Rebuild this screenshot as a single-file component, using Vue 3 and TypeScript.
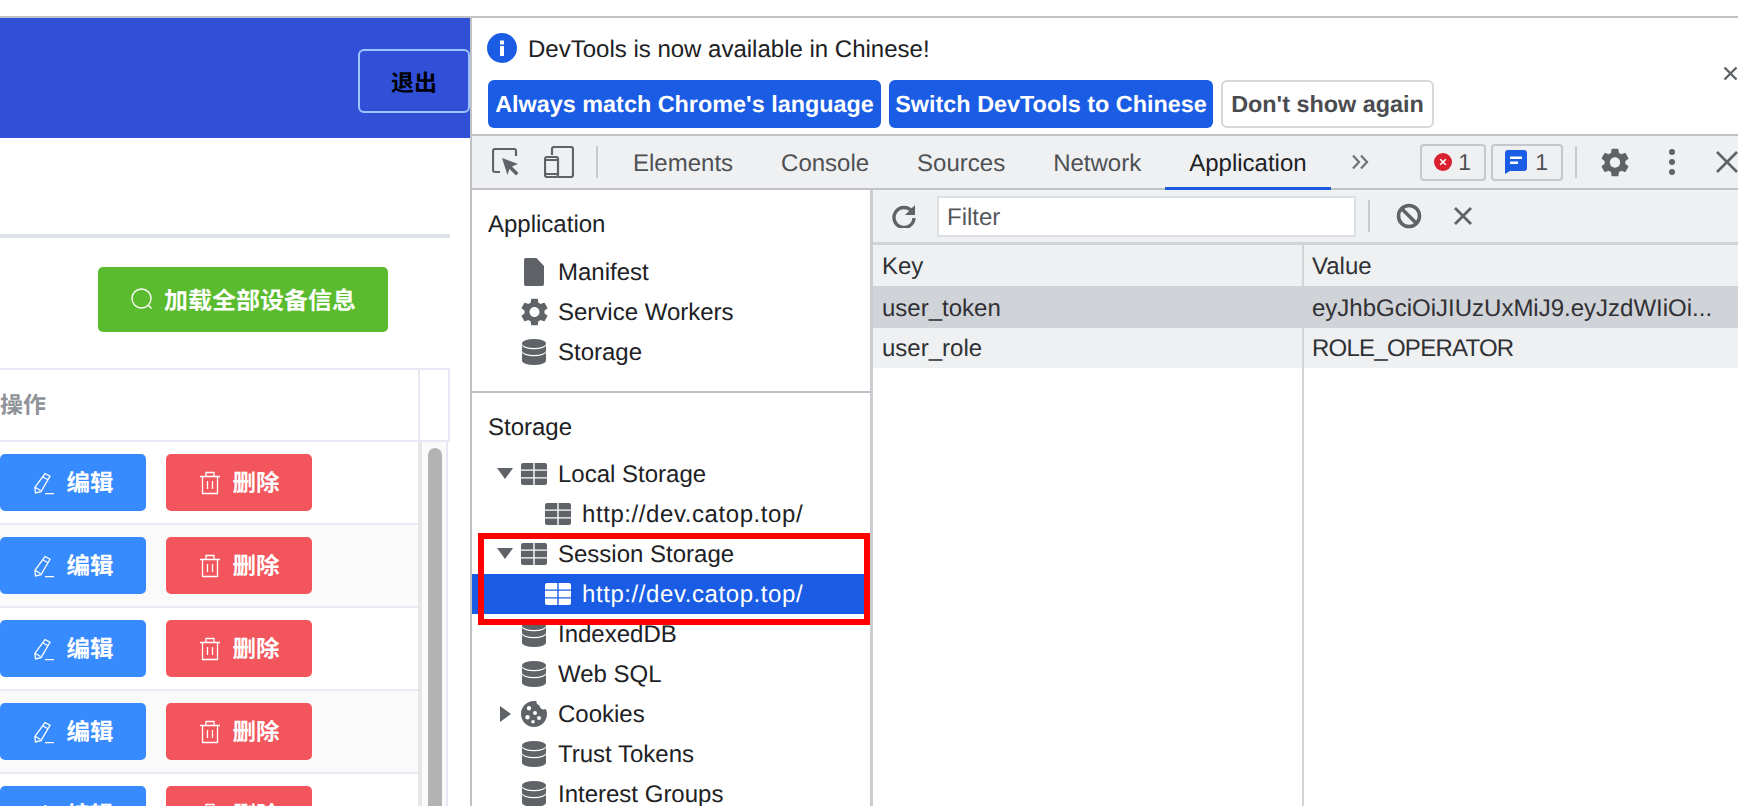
<template>
  <div class="page">
    <svg class="defs" width="0" height="0">
      <symbol id="i-grid" viewBox="0 0 26 22">
        <path d="M2 0h10.300v6.400H0V2a2 2 0 0 1 2-2zM13.700 0H24a2 2 0 0 1 2 2v4.400H13.700zM0 7.800h12.300v6.400H0zM13.700 7.800H26v6.400H13.700zM0 15.600h12.300V22H2a2 2 0 0 1-2-2zM13.700 15.600H26V20a2 2 0 0 1-2 2H13.700z" />
      </symbol>
      <symbol id="i-db" viewBox="0 0 24 26">
        <ellipse cx="12" cy="4.500" rx="12" ry="4.500" />
        <path d="M0 5.700A12 4.500 0 0 0 24 5.700V11.500A12 4.500 0 0 1 0 11.500z" />
        <path d="M0 12.700A12 4.500 0 0 0 24 12.700V21.500A12 4.500 0 0 1 0 21.500z" />
      </symbol>
      <symbol id="i-file" viewBox="0 0 20 28">
        <path d="M2 0h10.500L20 8v18a2 2 0 0 1-2 2H2a2 2 0 0 1-2-2V2a2 2 0 0 1 2-2z" />
      </symbol>
      <symbol id="i-gear" viewBox="2.300 1.900 19.400 20.200">
        <path d="M19.140 12.940c.04-.3.06-.61.06-.94 0-.32-.02-.64-.07-.94l2.030-1.580a.49.49 0 0 0 .12-.61l-1.920-3.320a.488.488 0 0 0-.59-.22l-2.390.96c-.5-.38-1.030-.7-1.620-.94l-.36-2.540a.484.484 0 0 0-.48-.41h-3.840c-.24 0-.43.17-.47.41l-.36 2.540c-.59.24-1.130.57-1.620.94l-2.390-.96c-.22-.08-.47 0-.59.22L2.740 8.870c-.12.21-.08.47.12.61l2.030 1.580c-.05.3-.09.63-.09.94s.02.64.07.94l-2.030 1.580a.49.49 0 0 0-.12.61l1.920 3.320c.12.22.37.29.59.22l2.390-.96c.5.38 1.030.7 1.620.94l.36 2.540c.05.24.24.41.48.41h3.840c.24 0 .44-.17.47-.41l.36-2.540c.59-.24 1.130-.56 1.620-.94l2.390.96c.22.08.47 0 .59-.22l1.920-3.320c.12-.22.07-.47-.12-.61l-2.010-1.580zM12 15.600c-1.980 0-3.600-1.620-3.600-3.600s1.620-3.600 3.600-3.600 3.600 1.620 3.600 3.600-1.620 3.600-3.600 3.600z" />
      </symbol>
      <symbol id="i-cookie" viewBox="0 0 26 26">
        <path fill-rule="evenodd" d="M13 0c.9 0 1.700.1 2.500.3-.3 2 1 3.800 3 4.100.2 2.300 2 4 4.300 4.100.7 0 1.300-.1 1.900-.4.800 1.500 1.300 3.100 1.300 4.900 0 7.200-5.800 13-13 13S0 20.200 0 13 5.800 0 13 0zM8 5a2.200 2.200 0 1 0 0 4.400A2.200 2.200 0 0 0 8 5zm6 5a2 2 0 1 0 0 4 2 2 0 0 0 0-4zM6.500 14a2.200 2.200 0 1 0 0 4.400 2.200 2.200 0 0 0 0-4.400zm11.500 1a2 2 0 1 0 0 4 2 2 0 0 0 0-4zm-6 4a1.800 1.800 0 1 0 0 3.600 1.800 1.800 0 0 0 0-3.600z" />
      </symbol>
    </svg>

    <div class="left-pane">
      <div class="top-bar">
        <button class="logout">退出</button>
      </div>
      <div class="divider"></div>
      <div class="action-row">
        <button class="load-btn">
          <svg class="search-icon" width="22" height="22" viewBox="0 0 22 22">
            <circle cx="10.500" cy="10.500" r="9.500" />
            <path d="M17.500 17.500l3 3" />
          </svg>
          <span>加载全部设备信息</span>
        </button>
      </div>
      <div class="device-table">
        <div class="table-head">
          <div class="head-cell">操作</div>
          <div class="head-gutter"></div>
        </div>
        <div class="table-body">
          <div class="rows">
            <div v-for="n in 5" :key="n" class="row" :class="{ striped: n % 2 === 0 }">
              <button class="row-btn edit">
                <svg width="22" height="24" viewBox="0 0 22 24">
                  <path d="M12 2.500l5 2.800-9 15.400-5.500 1.300-.6-5.600zM10 6l5 2.800M2.500 16.500l5 3M12 22.600h9" />
                </svg>
                <span>编辑</span>
              </button>
              <button class="row-btn remove">
                <svg width="22" height="24" viewBox="0 0 22 24">
                  <path d="M1 5.500h20M7 5.500V1.500h8v4M3.500 5.500v17h15v-17M8.500 10v8M13.500 10v8" />
                </svg>
                <span>删除</span>
              </button>
            </div>
          </div>
          <div class="scroll-track">
            <div class="scroll-thumb"></div>
          </div>
        </div>
      </div>
    </div>

    <div class="devtools">
      <div class="banner">
        <div class="banner-msg">
          <svg width="30" height="30" viewBox="0 0 30 30">
            <circle cx="15" cy="15" r="15" fill="#1a5ce3" />
            <rect x="13" y="13" width="4" height="10" fill="#fff" />
            <rect x="13" y="7.500" width="4" height="4" fill="#fff" />
          </svg>
          <span>DevTools is now available in Chinese!</span>
        </div>
        <div class="banner-actions">
          <button class="lang-btn primary first">Always match Chrome's language</button>
          <button class="lang-btn primary second">Switch DevTools to Chinese</button>
          <button class="lang-btn plain">Don't show again</button>
        </div>
        <svg class="banner-close" width="15" height="15" viewBox="0 0 15 15">
          <path d="M1.500 1.500l12 12M13.500 1.500l-12 12" />
        </svg>
      </div>

      <div class="toolbar">
        <svg class="tool-inspect" width="28" height="28" viewBox="0 0 28 28">
          <path class="line" d="M8 24H3a2 2 0 0 1-2-2V3a2 2 0 0 1 2-2h19a2 2 0 0 1 2 2v5" />
          <path class="solid" d="M10 10l16 6-6 2.500 6.500 6.500-2.500 2.500-6.500-6.500-2 6z" />
        </svg>
        <svg class="tool-device" width="30" height="32" viewBox="0 0 30 32">
          <path class="line" d="M8 9V3a2 2 0 0 1 2-2h17a2 2 0 0 1 2 2v26a2 2 0 0 1-2 2H14" />
          <rect class="line" x="1" y="11" width="13" height="20" rx="2" />
          <path class="line" d="M1 14h13M1 28h13" />
        </svg>
        <div class="tool-sep"></div>
        <div class="tabs">
          <div v-for="tab in tabs" :key="tab" class="tab" :class="{ active: tab === 'Application' }">{{ tab }}</div>
        </div>
        <svg class="chevrons" width="18" height="16" viewBox="0 0 18 16">
          <path d="M2 1.500L8 8l-6 6.500M10 1.500L16 8l-6 6.500" />
        </svg>
        <div class="badge error">
          <svg width="18" height="18" viewBox="0 0 18 18">
            <circle cx="9" cy="9" r="9" fill="#d9202f" />
            <path d="M6.200 6.200l5.600 5.600M11.800 6.200l-5.600 5.600" stroke="#fff" stroke-width="1.600" />
          </svg>
          <span>1</span>
        </div>
        <div class="badge info">
          <svg width="22" height="24" viewBox="0 0 22 24">
            <path d="M3 0h16a3 3 0 0 1 3 3v15a3 3 0 0 1-3 3H5l-5 3V3a3 3 0 0 1 3-3z" fill="#1a5ce3" />
            <path d="M5 6.500h12v2.500H5zM5 11.500h8V14H5z" fill="#fff" />
          </svg>
          <span>1</span>
        </div>
        <div class="tool-sep badge-sep"></div>
        <svg class="solid gear" width="28" height="29"><use href="#i-gear" /></svg>
        <svg class="kebab" width="6" height="26" viewBox="0 0 6 26">
          <circle cx="3" cy="3" r="3" />
          <circle cx="3" cy="13" r="3" />
          <circle cx="3" cy="23" r="3" />
        </svg>
        <svg class="tool-close" width="24" height="24" viewBox="0 0 24 24">
          <path d="M2 2l20 20M22 2L2 22" />
        </svg>
      </div>

      <div class="panels">
        <aside class="sidebar">
          <div class="side-section top">
            <div class="side-title">Application</div>
            <div v-for="item in appItems" :key="item.label" class="side-row">
              <span class="arrow"></span>
              <span class="icon-slot">
                <svg :width="item.w" :height="item.h"><use :href="item.icon" /></svg>
              </span>
              <span class="side-label">{{ item.label }}</span>
            </div>
          </div>
          <div class="side-section">
            <div class="side-title">Storage</div>
            <div
              v-for="item in storageItems"
              :key="item.label + item.sub"
              class="side-row"
              :class="{ sub: item.sub, selected: item.selected }"
            >
              <span class="arrow" :class="item.arrow"></span>
              <span class="icon-slot">
                <svg :width="item.w" :height="item.h"><use :href="item.icon" /></svg>
              </span>
              <span class="side-label">{{ item.label }}</span>
            </div>
          </div>
          <div class="red-box"></div>
        </aside>

        <section class="storage-view">
          <div class="filter-bar">
            <svg class="refresh" width="24" height="24" viewBox="0 0 24 24">
              <path d="M20 7.500A10 10 0 1 0 22 14" />
              <path class="solid-head" d="M23 1v10H13z" />
            </svg>
            <div class="filter-input">Filter</div>
            <div class="filter-sep"></div>
            <svg class="block" width="26" height="26" viewBox="0 0 26 26">
              <circle cx="13" cy="13" r="10.500" />
              <path d="M5.500 5.500l15 15" />
            </svg>
            <svg class="clear" width="20" height="20" viewBox="0 0 20 20">
              <path d="M2 2l16 16M18 2L2 18" />
            </svg>
          </div>
          <div class="kv-table">
            <div class="kv-col key">
              <div class="kv-head">Key</div>
              <div class="kv-cell sel">user_token</div>
              <div class="kv-cell">user_role</div>
            </div>
            <div class="kv-col value">
              <div class="kv-head">Value</div>
              <div class="kv-cell sel">eyJhbGciOiJIUzUxMiJ9.eyJzdWIiOi...</div>
              <div class="kv-cell upper">ROLE_OPERATOR</div>
            </div>
          </div>
        </section>
      </div>
    </div>
  </div>
</template>

<script setup lang="ts">
interface SideItem {
  label: string;
  icon: string;
  w: number;
  h: number;
  sub?: boolean;
  arrow?: string;
  selected?: boolean;
}

const tabs: string[] = ['Elements', 'Console', 'Sources', 'Network', 'Application'];

const appItems: SideItem[] = [
  { label: 'Manifest', icon: '#i-file', w: 20, h: 28 },
  { label: 'Service Workers', icon: '#i-gear', w: 27, h: 28 },
  { label: 'Storage', icon: '#i-db', w: 24, h: 26 },
];

const storageItems: SideItem[] = [
  { label: 'Local Storage', icon: '#i-grid', w: 26, h: 22, arrow: 'down' },
  { label: 'http://dev.catop.top/', icon: '#i-grid', w: 26, h: 22, sub: true },
  { label: 'Session Storage', icon: '#i-grid', w: 26, h: 22, arrow: 'down' },
  { label: 'http://dev.catop.top/', icon: '#i-grid', w: 26, h: 22, sub: true, selected: true },
  { label: 'IndexedDB', icon: '#i-db', w: 24, h: 26 },
  { label: 'Web SQL', icon: '#i-db', w: 24, h: 26 },
  { label: 'Cookies', icon: '#i-cookie', w: 26, h: 26, arrow: 'right' },
  { label: 'Trust Tokens', icon: '#i-db', w: 24, h: 26 },
  { label: 'Interest Groups', icon: '#i-db', w: 24, h: 26 },
];
</script>

<style>
html,
body {
  margin: 0;
  overflow: hidden;
  background: #fff;
}
</style>

<style scoped>
.page {
  display: flex;
  width: 1738px;
  height: 788px;
  margin-top: 16px;
  border-top: 2px solid #c0c2c6;
  overflow: hidden;
  font-family: "Liberation Sans", "Noto Sans CJK SC", sans-serif;
  color: #202124;
  text-rendering: geometricPrecision;
}

.defs {
  position: absolute;
}

button {
  border: 0;
  padding: 0;
  font-family: inherit;
  text-rendering: geometricPrecision;
}

/* left: the web page */
.left-pane {
  width: 470px;
  flex: none;
  font-family: "Noto Sans CJK SC", sans-serif;
}

.top-bar {
  height: 120px;
  background: #324fd8;
  display: flex;
  justify-content: flex-end;
  align-items: center;
  box-sizing: border-box;
}

.logout {
  width: 112px;
  height: 64px;
  margin-top: 6px;
  background: transparent;
  border: 2px solid #9cc4ff;
  border-radius: 6px;
  color: #000;
  font-size: 23px;
  font-weight: 700;
}

.divider {
  width: 450px;
  height: 4px;
  margin-top: 96px;
  background: #dfe2e9;
}

.action-row {
  padding: 29px 0 36px 98px;
}

.load-btn {
  width: 290px;
  height: 65px;
  background: #5bbb2e;
  border-radius: 5px;
  color: #fff;
  font-size: 24px;
  font-weight: 700;
  display: flex;
  align-items: center;
  padding-left: 33px;
  padding-bottom: 2px;
  gap: 11px;
}

.search-icon {
  fill: none;
  stroke: #fff;
  stroke-width: 1.4;
}

.device-table {
  width: 450px;
}

.table-head {
  display: flex;
  height: 70px;
  border-top: 2px solid #e6e9f3;
  border-bottom: 2px solid #e6e9f3;
}

.head-cell {
  width: 418px;
  line-height: 66px;
  font-size: 23px;
  font-weight: 700;
  color: #909399;
  border-right: 2px solid #e6e9f3;
}

.head-gutter {
  flex: 1;
  border-right: 2px solid #e6e9f3;
}

.table-body {
  display: flex;
  height: 364px;
  overflow: hidden;
}

.rows {
  width: 418px;
}

.row {
  display: flex;
  align-items: center;
  gap: 20px;
  height: 81px;
  border-bottom: 2px solid #e8ebf4;
}

.row.striped {
  background: #fafafa;
}

.row-btn {
  width: 146px;
  height: 57px;
  border-radius: 5px;
  color: #fff;
  font-size: 23.5px;
  font-weight: 700;
  line-height: 52px;
  display: flex;
  align-items: center;
  justify-content: center;
  gap: 12px;
}

.row-btn span {
  margin-top: -3px;
}

.row-btn svg {
  fill: none;
  stroke: #fff;
  stroke-width: 1.3;
}

.row-btn.edit {
  background: #388bff;
}

.row-btn.remove {
  background: #f2565c;
}

.scroll-track {
  width: 30px;
  box-sizing: border-box;
  background: #fafafa;
  border-left: 4px solid #e6e6e6;
  border-right: 2px solid #e6e9f3;
  padding: 6px 4px 0 6px;
}

.scroll-thumb {
  height: 420px;
  border-radius: 8px;
  background: #b3b3b3;
}

/* right: devtools */
.devtools {
  flex: 1;
  min-width: 0;
  border-left: 2px solid #c0c2c6;
}

.banner {
  position: relative;
  height: 116px;
  box-sizing: border-box;
  padding: 15px 0 0 15px;
  background: #fff;
}

.banner-msg {
  display: flex;
  align-items: center;
  gap: 11px;
  font-size: 24px;
  height: 30px;
  line-height: 30px;
}

.banner-msg span {
  padding-top: 4px;
}

.banner-actions {
  display: flex;
  margin: 17px 0 0 1px;
}

.lang-btn {
  height: 48px;
  border-radius: 6px;
  font-size: 23.4px;
  box-sizing: border-box;
  white-space: nowrap;
  padding-top: 1px;
}

.lang-btn.primary {
  background: #1a5ce3;
  color: #fff;
  font-weight: 700;
}

.lang-btn.first {
  width: 393px;
}

.lang-btn.second {
  width: 324px;
  margin-left: 8px;
}

.lang-btn.plain {
  width: 213px;
  margin-left: 8px;
  background: #fff;
  border: 2px solid #d5d8dd;
  color: #4a4c50;
  font-weight: 700;
}

.banner-close {
  position: absolute;
  top: 48px;
  right: 0;
  fill: none;
  stroke: #5f6368;
  stroke-width: 2.4;
}

.toolbar {
  display: flex;
  align-items: center;
  height: 52px;
  background: #eef0f2;
  border-top: 2px solid #c0c2c6;
  border-bottom: 2px solid #c0c2c6;
}

.line {
  fill: none;
  stroke: #5f6368;
  stroke-width: 2.2;
}

.solid,
.solid-head {
  fill: #5f6368;
}

.tool-inspect {
  margin-left: 20px;
  flex: none;
}

.tool-device {
  margin-left: 24px;
  flex: none;
}

.tool-sep {
  width: 2px;
  height: 32px;
  margin-left: 22px;
  background: #c7c9cc;
  flex: none;
}

.tabs {
  display: flex;
  align-self: flex-start;
  margin-left: 11px;
}

.tab {
  box-sizing: border-box;
  height: 54px;
  padding: 5px 24px 0;
  line-height: 46px;
  font-size: 24px;
  color: #4e5054;
  border-bottom: 3px solid transparent;
}

.tab.active {
  color: #202124;
  border-bottom-color: #1a5ce3;
}

.chevrons {
  margin-left: 20px;
  fill: none;
  stroke: #6e7175;
  stroke-width: 2.2;
  flex: none;
}

.badge {
  display: flex;
  align-items: center;
  justify-content: center;
  gap: 6px;
  height: 37px;
  box-sizing: border-box;
  border: 2px solid #c4c7cc;
  border-radius: 4px;
  font-size: 23px;
  color: #4e5054;
  flex: none;
}

.badge.error {
  width: 66px;
  margin-left: 51px;
}

.badge.info {
  width: 72px;
  margin-left: 5px;
  gap: 8px;
}

.badge-sep {
  margin-left: 12px;
}

.gear {
  margin-left: 24px;
  flex: none;
}

.kebab {
  margin-left: 40px;
  fill: #5f6368;
  flex: none;
}

.tool-close {
  margin-left: 40px;
  fill: none;
  stroke: #5f6368;
  stroke-width: 2.6;
  flex: none;
}

.panels {
  display: flex;
  height: 616px;
}

.sidebar {
  position: relative;
  width: 398px;
  flex: none;
  background: #fff;
  border-right: 3px solid #c9ccd1;
  font-size: 24px;
}

.side-section {
  padding-top: 14px;
}

.side-section.top {
  height: 203px;
  box-sizing: border-box;
  border-bottom: 2px solid #c0c2c6;
}

.side-title {
  height: 40px;
  line-height: 42px;
  margin: 0 0 7px 16px;
}

.top .side-title {
  margin-bottom: 8px;
}

.side-row {
  display: flex;
  align-items: center;
  height: 40px;
  padding-left: 24px;
}

.side-row.sub {
  padding-left: 48px;
}

.side-row.sub .side-label {
  letter-spacing: 0.58px;
}

.side-label {
  padding-top: 2px;
}

.side-row.selected {
  background: #1a5ce3;
  color: #fff;
}

.arrow {
  width: 24px;
  height: 16px;
  flex: none;
  position: relative;
}

.arrow.down::before {
  content: "";
  position: absolute;
  left: 1px;
  top: 2px;
  border-left: 8px solid transparent;
  border-right: 8px solid transparent;
  border-top: 11px solid #5f6368;
}

.arrow.right::before {
  content: "";
  position: absolute;
  left: 4px;
  top: 0;
  border-top: 8px solid transparent;
  border-bottom: 8px solid transparent;
  border-left: 11px solid #5f6368;
}

.icon-slot {
  width: 28px;
  height: 28px;
  margin-right: 10px;
  flex: none;
  display: flex;
  align-items: center;
  justify-content: center;
  fill: #5f6368;
}

.selected .icon-slot {
  fill: #fff;
}

.red-box {
  position: absolute;
  left: 6px;
  top: 343px;
  width: 392px;
  height: 92px;
  box-sizing: border-box;
  border: 6px solid #ff0000;
  pointer-events: none;
}

.storage-view {
  flex: 1;
  min-width: 0;
  display: flex;
  flex-direction: column;
}

.filter-bar {
  display: flex;
  align-items: center;
  height: 52px;
  flex: none;
  background: #eef0f2;
  border-bottom: 3px solid #d0d3d8;
}

.refresh {
  margin-left: 19px;
  fill: none;
  stroke: #5f6368;
  stroke-width: 3.4;
  flex: none;
}

.refresh .solid-head {
  stroke: none;
}

.filter-input {
  width: 419px;
  height: 41px;
  margin-left: 21px;
  box-sizing: border-box;
  border: 2px solid #dcdfe3;
  background: #fff;
  padding-left: 8px;
  line-height: 39px;
  font-size: 24px;
  color: #55585c;
}

.filter-sep {
  width: 2px;
  height: 32px;
  margin-left: 12px;
  background: #c7c9cc;
}

.block {
  margin-left: 26px;
  fill: none;
  stroke: #5f6368;
  stroke-width: 3.6;
  flex: none;
}

.clear {
  margin-left: 31px;
  fill: none;
  stroke: #5f6368;
  stroke-width: 2.8;
  flex: none;
}

.kv-table {
  flex: 1;
  display: flex;
  font-size: 24px;
}

.kv-col.key {
  width: 429px;
  border-right: 2px solid #d0d3d8;
  flex: none;
}

.kv-col.value {
  flex: 1;
  min-width: 0;
}

.kv-head {
  height: 41px;
  line-height: 43px;
  padding-left: 9px;
  background: #eef0f2;
  border-bottom: 2px solid #d0d3d8;
  color: #303134;
}

.kv-cell {
  height: 40px;
  line-height: 42px;
  padding-left: 9px;
  background: #eef0f2;
  color: #303134;
  white-space: nowrap;
}

.kv-col.value .kv-head,
.kv-col.value .kv-cell {
  padding-left: 8px;
}

.kv-cell.upper {
  letter-spacing: -0.75px;
}

.kv-cell.sel {
  background: #d0d3d8;
}
</style>
